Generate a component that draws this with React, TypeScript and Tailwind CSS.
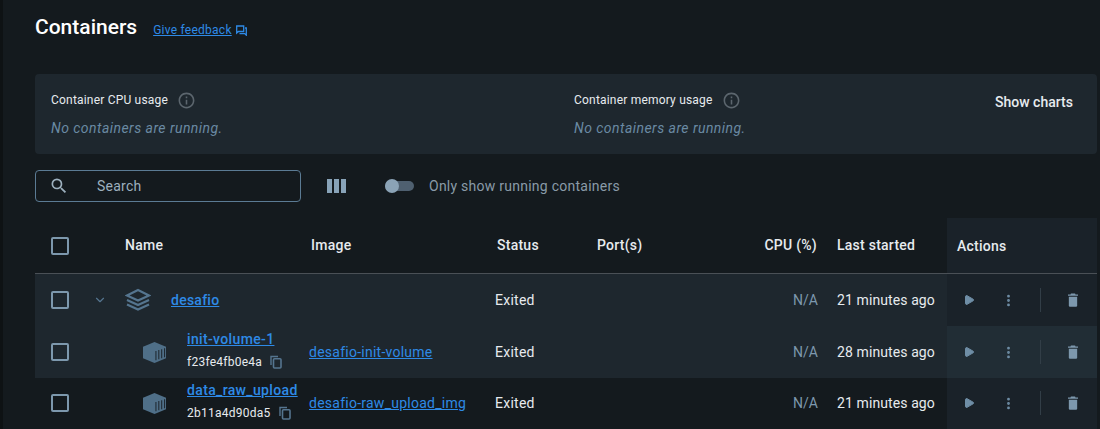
import { ChevronDown, Play, EllipsisVertical } from "lucide-react";
import { MdInfoOutline, MdSearch } from "react-icons/md";

const cols = "grid grid-cols-[90px_186px_186px_100px_120px_100px_130px_150px]";

function Checkbox() {
  return <span className="block h-[18px] w-[18px] rounded-[2px] border-2 border-[#7d98ad]" />;
}

function StackIcon() {
  return (
    <svg width="26" height="24" viewBox="0 0 26 24" fill="none" stroke="#55758f" strokeWidth="2.2">
      <path d="M13 2 L24 7.5 L13 12.5 L2 7.5 Z" />
      <path d="M2 12 L13 17 L24 12" />
      <path d="M2 16.5 L13 21.5 L24 16.5" />
    </svg>
  );
}

function BoxIcon() {
  return (
    <svg width="25" height="23" viewBox="0 0 26 24">
      <path d="M13 1 L25 6 V18 L13 23 L1 18 V6 Z" fill="#4f6f88" />
      <path d="M14.5 10.5 V20 M17.5 9.5 V19 M20.5 8.5 V18 M23.5 7.5 V17" stroke="#1e2830" strokeWidth="1.1" />
    </svg>
  );
}

function CopyIcon() {
  return (
    <svg width="12" height="14" viewBox="0 0 12 14" fill="none">
      <path d="M1 10 V1.5 H8" stroke="#55758f" strokeWidth="1.4" />
      <rect x="3.5" y="3.7" width="7.5" height="9.3" rx="1" stroke="#55758f" strokeWidth="1.6" />
    </svg>
  );
}

function FeedbackIcon() {
  return (
    <svg width="11" height="11" viewBox="0 0 11 11" fill="none" stroke="#2e8ae6" strokeWidth="1.3">
      <path d="M0.7 1 H7.7 V6.5 H2.5 L0.7 8 Z" />
      <path d="M9 3 H10.3 V10.2 L8.7 8.6 H3.5" />
    </svg>
  );
}

function ColumnsIcon() {
  return (
    <span className="flex gap-[2px]">
      <span className="h-[14px] w-[5px] bg-[#88a3b8]" />
      <span className="h-[14px] w-[5px] bg-[#88a3b8]" />
      <span className="h-[14px] w-[5px] bg-[#88a3b8]" />
    </span>
  );
}

function Actions({ bg }: { bg: string }) {
  return (
    <div className={`flex h-full items-center ${bg}`}>
      <span className="ml-[14px] flex w-[16px] justify-center">
        <Play size={12} fill="#6f8ea6" stroke="#6f8ea6" />
      </span>
      <span className="ml-[19px] flex w-[24px] justify-center">
        <EllipsisVertical size={15} stroke="#6f8ea6" strokeWidth={2.5} />
      </span>
      <span className="ml-[20px] h-[24px] w-px bg-[#323e47]" />
      <span className="ml-[27px] flex">
        <svg width="10" height="14" viewBox="0 0 12 14" fill="#7d98ad" preserveAspectRatio="none">
          <path d="M3.5 0.5 H8.5 L9 1.5 H12 V2.8 H0 V1.5 H3 Z" />
          <path d="M1 3.8 H11 V12.5 Q11 13.7 9.7 13.7 H2.3 Q1 13.7 1 12.5 Z" />
        </svg>
      </span>
    </div>
  );
}

function Row({
  rowBg,
  actionsBg,
  height,
  first,
  name,
  id,
  image,
  started,
}: {
  rowBg: string;
  actionsBg: string;
  height: string;
  first?: boolean;
  name: string;
  id?: string;
  image?: string;
  started: string;
}) {
  return (
    <div className={`${cols} ${height} items-center text-[14px] tracking-[0.25px] text-[#e7ebee] ${rowBg}`}>
      <div className="flex items-center pl-[16px]">
        <Checkbox />
        {first && <ChevronDown size={14} stroke="#55758f" className="ml-[24px]" />}
      </div>
      {first ? (
        <div className="flex items-center">
          <StackIcon />
          <a className="ml-[20px] font-medium text-[#2e8ae6] underline">{name}</a>
        </div>
      ) : (
        <div className="flex items-center pl-[17px]">
          <BoxIcon />
          <div className="ml-[20px] flex flex-col">
            <a className="mt-[-6px] font-medium leading-[20px] tracking-[0.35px] text-[#2e8ae6] underline whitespace-nowrap">{name}</a>
            <span className="mt-[5px] flex items-center gap-[8px] text-[12px] leading-[16px]">
              {id}
              <CopyIcon />
            </span>
          </div>
        </div>
      )}
      <div className="-ml-[2px]">{image && <a className="text-[#2e8ae6] underline">{image}</a>}</div>
      <div className="-ml-[2px]">Exited</div>
      <div />
      <div className="-mr-[1px] text-right tracking-normal text-[#7d98ad]">N/A</div>
      <div className="pl-[20px] tracking-[0.1px] whitespace-nowrap">{started}</div>
      <Actions bg={actionsBg} />
    </div>
  );
}

export default function App() {
  return (
    <div className="h-[429px] w-[1100px] overflow-hidden bg-[#141a1e] font-['Roboto',sans-serif]">
      <div className="flex h-full border-l-[3px] border-[#0e1214]">
        <div className="ml-[32px] w-[1062px]">
          <div className="flex h-[74px] items-start pt-[15px]">
            <h1 className="text-[21px] font-medium leading-[24px] text-white">Containers</h1>
            <a className="ml-[16px] mt-[8px] text-[12px] leading-[14px] tracking-[0.25px] text-[#2e8ae6] underline">Give feedback</a>
            <span className="ml-[4px] mt-[10px]">
              <FeedbackIcon />
            </span>
          </div>

          <div className="flex h-[80px] rounded-[4px] bg-[#1e272e] pl-[16px] pt-[16px]">
            <div className="w-[523px]">
              <div className="flex items-center text-[12px] leading-[20px] tracking-[0.2px] text-[#e7ebee]">
                Container CPU usage
                <MdInfoOutline size={19} color="#5c666e" className="ml-[9px]" />
              </div>
              <div className="mt-[8px] text-[14px] italic leading-[20px] tracking-[0.46px] text-[#6a8aa3]">No containers are running.</div>
            </div>
            <div className="w-[400px]">
              <div className="flex items-center text-[12px] leading-[20px] tracking-[0.2px] text-[#e7ebee]">
                Container memory usage
                <MdInfoOutline size={19} color="#5c666e" className="ml-[9px]" />
              </div>
              <div className="mt-[8px] text-[14px] italic leading-[20px] tracking-[0.46px] text-[#6a8aa3]">No containers are running.</div>
            </div>
            <div className="ml-[21px] text-[14px] font-medium leading-[24px] text-[#e7ebee] whitespace-nowrap">Show charts</div>
          </div>

          <div className="mt-[16px] flex h-[32px] items-center">
            <div className="flex h-[32px] w-[266px] items-center rounded-[4px] border border-[#5b7b94] pl-[13px]">
              <MdSearch size={20} color="#9db0be" />
              <span className="ml-[28px] text-[14px] tracking-[0.25px] text-[#9db0be]">Search</span>
            </div>
            <span className="ml-[26px]">
              <ColumnsIcon />
            </span>
            <span className="relative ml-[39px] block h-[10px] w-[29px] rounded-full bg-[#4f6070]">
              <span className="absolute left-0 top-[-2px] h-[14px] w-[14px] rounded-full bg-[#8ba3b6]" />
            </span>
            <span className="ml-[15px] text-[14px] tracking-[0.25px] text-[#8a9ba8]">Only show running containers</span>
          </div>

          <div className={`${cols} mt-[16px] h-[56px] items-center border-b border-[#4a5056] text-[14px] font-medium tracking-[0.25px] text-[#e7ebee]`}>
            <div className="pl-[16px]">
              <Checkbox />
            </div>
            <div>Name</div>
            <div>Image</div>
            <div>Status</div>
            <div>Port(s)</div>
            <div className="text-right whitespace-nowrap">CPU (%)</div>
            <div className="pl-[20px] whitespace-nowrap">Last started</div>
            <div className="flex h-full items-center bg-[#1a2229] pl-[10px] pt-[2px]">Actions</div>
          </div>
          <Row rowBg="bg-[#1e272e]" actionsBg="bg-[#1a2229]" height="h-[52px]" first name="desafio" started="21 minutes ago" />
          <Row rowBg="bg-[#1e272e]" actionsBg="bg-[#212d35]" height="h-[52px]" name="init-volume-1" id="f23fe4fb0e4a" image="desafio-init-volume" started="28 minutes ago" />
          <Row rowBg="bg-[#141a1e]" actionsBg="bg-[#1a2229]" height="h-[50px]" name="data_raw_upload" id="2b11a4d90da5" image="desafio-raw_upload_img" started="21 minutes ago" />
          <div className="ml-[912px] h-[2px] w-[150px] bg-[#1a2229]" />
        </div>
      </div>
    </div>
  );
}
